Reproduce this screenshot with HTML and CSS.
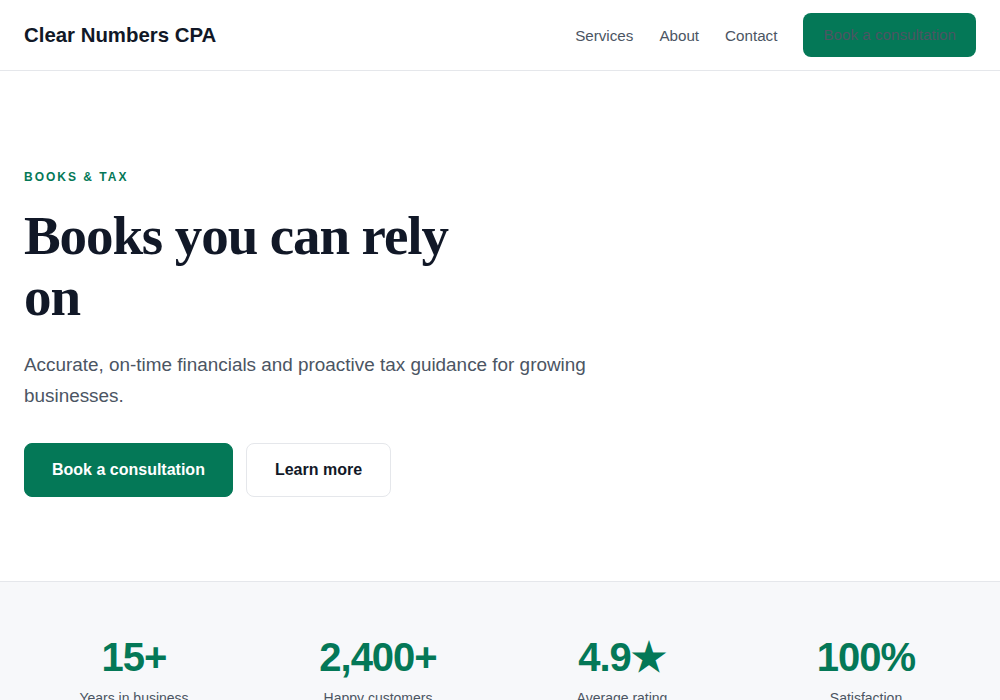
FILE: index.html
```html
<!DOCTYPE html>
<html lang="en">
<head>
    <meta charset="UTF-8">
    <meta name="viewport" content="width=device-width, initial-scale=1.0">
    <title>Clear Numbers CPA</title>
    <link rel="stylesheet" href="styles.css">
</head>
<body>
    <header class="site-header">
        <a class="logo" href="#">Clear Numbers CPA</a>
        <nav class="nav">
            <a href="#services">Services</a>
            <a href="#about">About</a>
            <a href="#contact">Contact</a>
            <a class="nav-cta" href="#book">Book a consultation</a>
        </nav>
    </header>

    <section class="hero">
        <p class="eyebrow">BOOKS &amp; TAX</p>
        <h1>Books you can rely on</h1>
        <p class="lead">Accurate, on-time financials and proactive tax guidance for growing businesses.</p>
        <div class="actions">
            <a class="btn btn-primary" href="#book">Book a consultation</a>
            <a class="btn btn-secondary" href="#services">Learn more</a>
        </div>
    </section>

    <section class="stats">
        <div class="stat">
            <div class="stat-value">15+</div>
            <div class="stat-label">Years in business</div>
        </div>
        <div class="stat">
            <div class="stat-value">2,400+</div>
            <div class="stat-label">Happy customers</div>
        </div>
        <div class="stat">
            <div class="stat-value">4.9★</div>
            <div class="stat-label">Average rating</div>
        </div>
        <div class="stat">
            <div class="stat-value">100%</div>
            <div class="stat-label">Satisfaction</div>
        </div>
    </section>
</body>
</html>
```

FILE: styles.css
```css
body {
    margin: 0;
    font-family: "Liberation Sans", Arial, sans-serif;
    color: #111827;
    background: white;
}

a {
    text-decoration: none;
}

.site-header {
    display: flex;
    align-items: center;
    justify-content: space-between;
    height: 70px;
    padding: 0 24px;
    border-bottom: 1px solid #e5e7eb;
}

.logo {
    font-size: 20.4px;
    font-weight: bold;
    color: #111827;
}

.nav {
    display: flex;
    align-items: center;
    gap: 26px;
}

.nav a {
    font-size: 15.2px;
    color: #4b5563;
}

.nav .nav-cta {
    background: #047857;
    color: #4b5563;
    padding: 12px 20px;
    line-height: 20px;
    border-radius: 8px;
}

.hero {
    padding: 99px 24px 84px;
}

.eyebrow {
    margin: 0 0 22px;
    font-size: 12px;
    line-height: 14px;
    font-weight: bold;
    letter-spacing: 2px;
    color: #047857;
}

h1 {
    margin: 0 0 23px;
    max-width: 470px;
    font-family: "Liberation Serif", "Times New Roman", serif;
    font-size: 55px;
    line-height: 1.1;
    letter-spacing: -1.1px;
    color: #111827;
}

.lead {
    margin: 0 0 31px;
    max-width: 620px;
    font-size: 18.9px;
    line-height: 1.63;
    color: #4b5563;
}

.actions {
    display: flex;
    gap: 13px;
}

.btn {
    display: inline-block;
    padding: 16px 27px;
    line-height: 20px;
    font-size: 16px;
    font-weight: bold;
    border-radius: 8px;
}

.btn-primary {
    background: #047857;
    color: white;
    border: 1px solid #047857;
}

.btn-secondary {
    padding: 16px 28px;
    background: white;
    color: #111827;
    border: 1px solid #e5e7eb;
}

.stats {
    display: grid;
    grid-template-columns: repeat(4, 1fr);
    gap: 24px;
    padding: 51px 24px 50px;
    background: #f7f8fa;
    border-top: 1px solid #e5e7eb;
}

.stat {
    text-align: center;
}

.stat-value {
    font-size: 40px;
    font-weight: bold;
    line-height: 1.2;
    letter-spacing: -1px;
    color: #047857;
}

.stat-label {
    margin-top: 9px;
    font-size: 14px;
    color: #4b5563;
}
```
